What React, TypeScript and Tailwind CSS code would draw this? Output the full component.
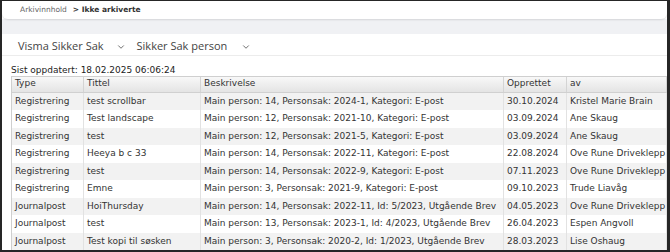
import { ChevronDown } from "lucide-react";

const rows = [
  ["Registrering", "test scrollbar", "Main person: 14, Personsak: 2024-1, Kategori: E-post", "30.10.2024", "Kristel Marie Brain"],
  ["Registrering", "Test landscape", "Main person: 12, Personsak: 2021-10, Kategori: E-post", "03.09.2024", "Ane Skaug"],
  ["Registrering", "test", "Main person: 12, Personsak: 2021-5, Kategori: E-post", "03.09.2024", "Ane Skaug"],
  ["Registrering", "Heeya b c 33", "Main person: 14, Personsak: 2022-11, Kategori: E-post", "22.08.2024", "Ove Rune Driveklepp"],
  ["Registrering", "test", "Main person: 14, Personsak: 2022-9, Kategori: E-post", "07.11.2023", "Ove Rune Driveklepp"],
  ["Registrering", "Emne", "Main person: 3, Personsak: 2021-9, Kategori: E-post", "09.10.2023", "Trude Liavåg"],
  ["Journalpost", "HoiThursday", "Main person: 14, Personsak: 2022-11, Id: 5/2023, Utgående Brev", "04.05.2023", "Ove Rune Driveklepp"],
  ["Journalpost", "test", "Main person: 13, Personsak: 2023-1, Id: 4/2023, Utgående Brev", "26.04.2023", "Espen Angvoll"],
  ["Journalpost", "Test kopi til søsken", "Main person: 3, Personsak: 2020-2, Id: 1/2023, Utgående Brev", "28.03.2023", "Lise Oshaug"],
];

const cols = ["w-[72px]", "w-[117px]", "w-[303px]", "w-[63px]", "flex-1"];
const heads = ["Type", "Tittel", "Beskrivelse", "Opprettet", "av"];

export default function App() {
  return (
    <div className="w-[670px] h-[252px] overflow-hidden bg-white border-t border-l-2 border-r-[3px] border-b-2 border-[#262626] flex flex-col font-['DejaVu_Sans',sans-serif]">
      {/* breadcrumb */}
      <div className="h-[19px] bg-white rounded-b-[6px] shadow-[0_1px_2px_rgba(0,0,0,0.12)] flex items-center pl-[18px] text-[7.5px] relative z-10">
        <span className="text-[#666]">Arkivinnhold</span>
        <span className="ml-[6px] font-bold text-[#333]">&gt; Ikke arkiverte</span>
      </div>
      <div className="h-[15px] bg-[#f0f1f4]" />

      {/* tabs */}
      <div className="h-[22px] pt-[5px] flex items-center pl-[16px] border-b border-[#ececec] font-['Open_Sans',sans-serif] text-[11px] text-[#444]">
        <span>Visma Sikker Sak</span>
        <ChevronDown className="ml-[12px] w-[10px] h-[10px] text-[#555]" strokeWidth={2} />
        <span className="ml-[11px]">Sikker Sak person</span>
        <ChevronDown className="ml-[14px] w-[10px] h-[10px] text-[#555]" strokeWidth={2} />
      </div>

      <div className="pl-[9px] pt-[9px] text-[9px] leading-[10px] text-[#222]">
        Sist oppdatert: 18.02.2025 06:06:24
      </div>

      {/* table */}
      <div className="ml-[9px] mt-[1px] border-l border-t border-[#cfcfcf] text-[9px] text-[#333]">
        <div className="h-[16px] flex bg-gradient-to-b from-[#f8f8f8] to-[#e4e4e4] border-b border-[#d0d0d0]">
          {heads.map((h, i) => (
            <div key={h} className={`${cols[i]} px-[3px] flex items-center border-r border-[#d4d4d4]`}>
              {h}
            </div>
          ))}
        </div>
        {rows.map((r, ri) => (
          <div key={ri} className={`h-[17.5px] flex ${ri % 2 === 0 ? "bg-[#f2f2f2]" : "bg-white"}`}>
            {r.map((c, i) => (
              <div key={i} className={`${cols[i]} px-[3px] flex items-center whitespace-nowrap overflow-hidden border-r border-[#e2e2e2]`}>
                {c}
              </div>
            ))}
          </div>
        ))}
      </div>
    </div>
  );
}
